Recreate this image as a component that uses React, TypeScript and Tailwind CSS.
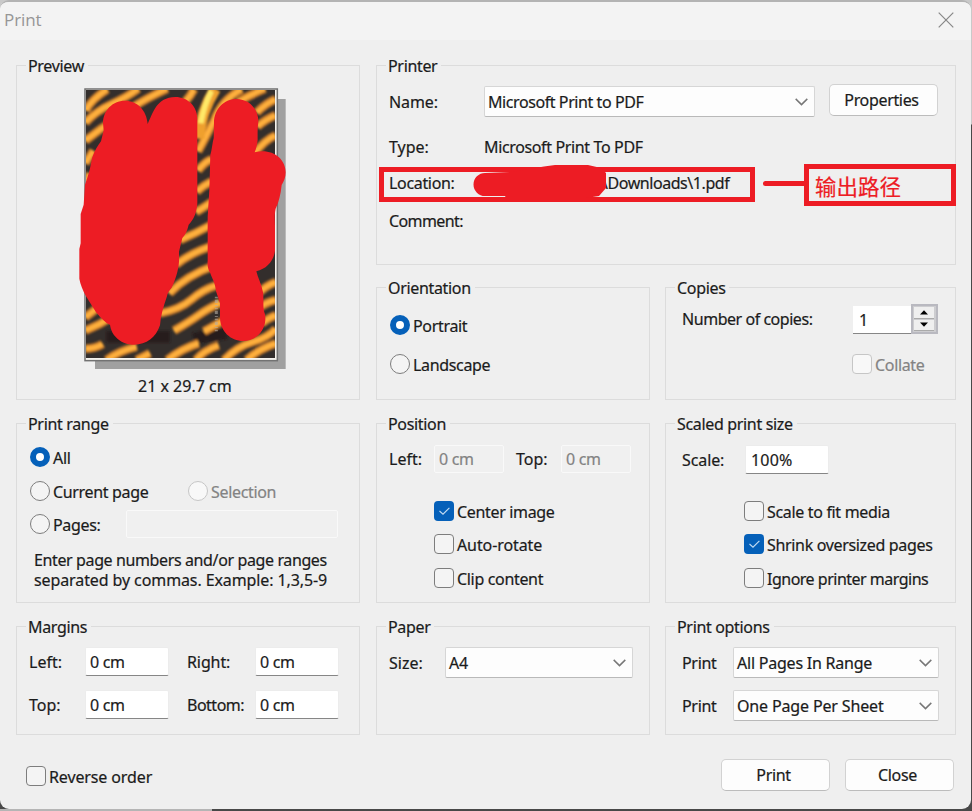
import type { ReactNode } from "react";
import { clsx } from "clsx";

interface GroupProps {
  title: string;
  className?: string;
  children?: ReactNode;
}

// Group box with its caption sitting on the top border
function Group({ title, className, children }: GroupProps) {
  return (
    <section className={clsx("relative border border-[#dcdcdc]", className)}>
      <h2 className="absolute -top-[11px] left-[9px] bg-[#efefef] pl-0.5 pr-1 leading-[22px]">{title}</h2>
      {children}
    </section>
  );
}

function Chevron() {
  return (
    <svg className="mr-[6px] h-2 w-[13px]" viewBox="0 0 13 8" fill="none" stroke="#777" strokeWidth="1.5">
      <path d="M0.7 0.9L6.5 6.6L12.3 0.9" />
    </svg>
  );
}

function Select({ value, className }: { value: string; className?: string }) {
  return (
    <div
      className={clsx(
        "flex h-[31px] shrink-0 items-center justify-between rounded-[2px] border border-[#d6d6d6] border-b-[#b9b9b9] bg-[#fdfdfd] pl-[3px]",
        className
      )}
    >
      <span>{value}</span>
      <Chevron />
    </div>
  );
}

function Field({ value = "", disabled, className }: { value?: string; disabled?: boolean; className?: string }) {
  return (
    <div
      className={clsx(
        "flex shrink-0 items-center rounded-[2px] border",
        disabled
          ? "h-7 border-[#f9f9f9] bg-[#f0f0f0] text-[#838383]"
          : "h-[29px] border-[#ececec] border-b-[#868686] bg-white",
        className ?? "w-[84px] pl-1"
      )}
    >
      {value}
    </div>
  );
}

interface OptionProps {
  label: string;
  checked?: boolean;
  disabled?: boolean;
  className?: string;
}

function Radio({ label, checked, disabled, className }: OptionProps) {
  return (
    <div className={clsx("flex h-5 items-center gap-[3px]", disabled && "text-[#838383]", className)}>
      <span
        className={clsx(
          "size-5 shrink-0 rounded-full",
          checked && "border-[6px] border-[#0560b9] bg-white",
          !checked && !disabled && "border-[1.5px] border-[#7d7d7d] bg-[#f4f4f4]",
          disabled && "border border-[#c6c6c6] bg-[#f8f8f8]"
        )}
      />
      <span className="pt-px">{label}</span>
    </div>
  );
}

function Checkbox({ label, checked, disabled, className }: OptionProps) {
  return (
    <div className={clsx("flex h-5 items-center gap-[3px]", disabled && "text-[#838383]", className)}>
      <span
        className={clsx(
          "flex size-5 shrink-0 items-center justify-center rounded-[4px]",
          checked && "bg-[#0560b9]",
          !checked && !disabled && "border-[1.5px] border-[#7d7d7d] bg-[#f4f4f4]",
          disabled && "border border-[#c6c6c6] bg-[#f8f8f8]"
        )}
      >
        {checked && (
          <svg width="11" height="8" viewBox="0 0 11 8" fill="none" stroke="#c4dcf2" strokeWidth="1.1">
            <path d="M0.5 4L4 7.2L10.4 0.8" />
          </svg>
        )}
      </span>
      <span className="pt-px">{label}</span>
    </div>
  );
}

function Button({ children, className }: { children: ReactNode; className?: string }) {
  return (
    <button
      className={clsx(
        "h-8 w-[109px] shrink-0 rounded-[5px] border border-[#d2d2d2] border-b-[#bcbcbc] bg-[#fdfdfd] pr-1",
        className
      )}
    >
      {children}
    </button>
  );
}

const STRIPES = [
  "M48 92Q62 60 112 28",
  "M46 128Q80 92 125 72T205 26",
  "M46 182Q90 146 140 116",
  "M46 250L70 212",
  "M46 315L60 280",
  "M185 84Q230 54 292 26",
  "M345 66Q362 48 372 28",
  "M384 214Q404 178 432 122Q454 60 515 28",
  "M505 66Q540 44 585 26",
  "M560 98Q590 68 617 58",
  "M562 140Q590 116 617 106",
  "M552 222Q586 178 617 166",
  "M384 272Q405 244 425 238",
  "M380 335Q400 316 425 304",
  "M378 396Q396 386 425 366",
  "M330 480Q378 460 425 434",
  "M318 554Q360 520 425 498",
  "M298 640Q350 586 430 558",
  "M270 700Q330 688 365 658T440 616",
  "M312 752Q360 724 385 706T452 668",
  "M402 754L460 722",
  "M46 712L92 676",
  "M46 752Q90 734 130 708",
  "M46 806Q75 806 98 792",
  "M110 840Q145 814 200 800",
  "M200 840L240 820",
  "M292 840Q335 806 386 790",
  "M378 840Q400 812 446 796",
  "M462 840Q500 800 548 786T618 746",
  "M530 840Q565 808 618 790",
  "M562 642Q590 616 618 606",
  "M566 684Q590 666 618 660",
  "M575 730Q600 712 618 706",
];

function PagePreview() {
  return (
    <svg className="ml-[53px] mt-[14px] block" width="230" height="300" viewBox="0 0 690 900">
      <defs>
        <filter id="soft" x="-5%" y="-5%" width="110%" height="110%">
          <feGaussianBlur stdDeviation="3.5" />
        </filter>
        <clipPath id="art">
          <rect x="48" y="30" width="567" height="804" />
        </clipPath>
      </defs>
      <rect x="75" y="57" width="572" height="810" fill="#a0a0a0" />
      <rect x="45" y="27" width="577" height="815" fill="#f4f1ec" stroke="#727272" strokeWidth="4.5" />
      <g clipPath="url(#art)">
        <rect x="48" y="30" width="567" height="804" fill="#332e2c" />
        <g fill="none" filter="url(#soft)">
          <path d="M110 770H300M370 775L470 760" stroke="#251d1e" strokeWidth="34" />
          {STRIPES.map((d) => (
            <path key={d} d={d} stroke="#c67a2c" strokeWidth="27" />
          ))}
          {STRIPES.map((d) => (
            <path key={d} d={d} stroke="#ffb03c" strokeWidth="14" />
          ))}
          <path d="M386 176Q392 96 436 26" stroke="#efa02e" strokeWidth="34" />
          <path d="M392 130Q402 76 424 32" stroke="#ffe968" strokeWidth="17" />
        </g>
        <path d="M439 650V755" stroke="#b5aea4" strokeWidth="9" strokeDasharray="5 4 10 6 3 5" opacity="0.6" />
      </g>
      {/* redaction strokes */}
      <path
        fill="#ed1c24"
        d="M99 130C99 92 127 62 165 62C202 62 230 91 233 132C247 103 259 51 316 51C354 51 382 80 382 116V370C380 398 371 420 356 434C352 452 346 464 337 474L327 515V545C325 572 316 600 305 623C297 633 292 639 291 649C281 678 272 706 270 736C258 773 229 794 193 794C154 794 124 768 120 734C107 730 93 714 78 697L48 649C38 629 31 613 28 596V507L32 490V402L41 374L45 314C55 286 61 265 66 234C74 211 84 196 93 184L101 151Z"
      />
      <path
        fill="#ed1c24"
        d="M432 128C432 88 462 57 499 57C538 57 566 88 565 126C562 144 563 162 563 180C561 196 558 207 554 217C605 204 647 235 647 277C647 292 642 303 635 315C632 344 626 367 617 386C613 405 615 418 615 438V512C611 544 590 566 559 574C563 592 575 613 579 637C582 659 578 675 582 694C586 704 586 710 586 720C584 756 555 783 520 783C481 783 451 753 450 714V669L438 634C436 608 425 594 421 580C413 565 412 558 413 540V410L418 330L421 225C426 208 427 190 431 174Z"
      />
    </svg>
  );
}

function Preview() {
  return (
    <Group title="Preview" className="h-[335px] w-[344px]">
      <PagePreview />
      <p className="ml-[121px] -mt-[5px] leading-[22px] tracking-normal">21 x 29.7 cm</p>
    </Group>
  );
}

function Printer() {
  return (
    <Group title="Printer" className="h-[200px]">
      <div className="flex items-start pl-3 pt-[18px]">
        <span className="mt-[7px] w-[95px] leading-[22px] tracking-[-0.1px]">Name:</span>
        <Select className="mt-0.5 w-[331px] tracking-[-0.42px]" value="Microsoft Print to PDF" />
        <Button className="ml-[14px]">Properties</Button>
      </div>
      <div className="mt-[19px] flex pl-3 leading-[22px]">
        <span className="w-[95px] tracking-normal">Type:</span>
        <span className="tracking-[-0.36px]">Microsoft Print To PDF</span>
      </div>
      <div className="relative ml-0.5 mt-[9px] flex h-[35px] w-[376px] items-center border-[5px] border-[#ed1c24] pb-[3px] pl-[5px]">
        <span className="w-[213px]">Location:</span>
        <span className="tracking-[-0.44px]">\Downloads\1.pdf</span>
        <svg className="absolute -top-[8px] left-[87px]" width="136" height="38" viewBox="0 0 136 38">
          <path
            fill="#ed1c24"
            d="M14 9L40 8L73 2.5L84 1H117L130 4L135 9V24L128 32L115 34H35L34 32H14A11.5 11.5 0 0 1 14 9Z"
          />
        </svg>
      </div>
      <p className="mt-2 pl-3 leading-[22px] tracking-[-0.6px]">Comment:</p>
      {/* callout */}
      <div className="absolute left-[386px] top-[98px] flex items-start">
        <span className="mt-[17px] h-[5px] w-[41px] rounded-l-sm bg-[#ed1c24]" />
        <span className="h-[42px] w-[152px] border-[5px] border-[#ed1c24] pl-[6px] pt-px font-['Noto_Sans_CJK_SC',sans-serif] text-[21.5px] leading-8 tracking-normal text-[#ed1c24]">
          输出路径
        </span>
      </div>
    </Group>
  );
}

function Spinner() {
  return (
    <div className="flex h-[30px] w-[85px] items-center">
      <div className="mt-0.5 flex h-7 flex-1 items-center border-b border-[#868686] bg-white pl-1.5">1</div>
      <div className="flex h-[30px] w-[27px] flex-col gap-px border-2 border-[#b9b9c0] bg-[#cdcdd0] py-px pl-px pr-0.5">
        <div className="flex flex-1 items-center justify-center border-b border-[#aaa] bg-[#efefef]">
          <svg width="8" height="5" viewBox="0 0 8 5">
            <path d="M0 4.5L4 0.3L8 4.5Z" />
          </svg>
        </div>
        <div className="flex flex-1 items-center justify-center border-b border-[#aaa] bg-[#efefef]">
          <svg width="8" height="5" viewBox="0 0 8 5">
            <path d="M0 0.5L4 4.7L8 0.5Z" />
          </svg>
        </div>
      </div>
    </div>
  );
}

export default function App() {
  return (
    <div className="h-[811px] w-[972px] overflow-hidden bg-linear-to-b from-[#c9c9c9] from-[124px] to-[#484848] to-[125px] font-['Noto_Sans',sans-serif] text-base tracking-[-0.33px] text-[#1b1b1b] [-webkit-text-stroke:0.2px]">
      <div className="h-[809px] w-[970.5px] overflow-hidden rounded-[9px] border-t-2 border-[#b3b3b3] bg-[#efefef]">
        <header className="flex h-[38px] items-center justify-between bg-[#f3f3f3] pl-1 pr-[17px]">
          <h1 className="pb-0.5 font-['Open_Sans',sans-serif] text-[17px] tracking-[-0.1px] text-[#969696] [-webkit-text-stroke:0px]">
            Print
          </h1>
          <svg className="mb-0.5" width="16" height="16" viewBox="0 0 16 16" fill="none" stroke="#878787" strokeWidth="1.2">
            <path d="M0.7 0.7L15.3 15.3M15.3 0.7L0.7 15.3" />
          </svg>
        </header>

        <main className="w-[971px] pl-4 pt-[25px]">
          <div className="flex gap-4">
            <Preview />
            <div className="flex w-[580px] flex-col gap-[22px]">
              <Printer />
              <div className="flex gap-[15px]">
                <Group title="Orientation" className="h-[113px] w-[274px] pl-[13px] pt-[27px]">
                  <Radio label="Portrait" checked />
                  <Radio label="Landscape" className="mt-[19px]" />
                </Group>
                <Group title="Copies" className="h-[113px] w-[291px] pl-4 pt-4">
                  <div className="flex items-center">
                    <span className="w-[171px] tracking-[-0.46px]">Number of copies:</span>
                    <Spinner />
                  </div>
                  <Checkbox label="Collate" disabled className="ml-[170px] mt-5" />
                </Group>
              </div>
            </div>
          </div>

          <div className="mt-[23px] flex">
            <Group title="Print range" className="h-[180px] w-[344px] pl-[13px] pt-[23px]">
              <Radio label="All" checked />
              <div className="mt-[14px] flex">
                <Radio label="Current page" className="w-[158px]" />
                <Radio label="Selection" disabled />
              </div>
              <div className="mt-[9px] flex items-center">
                <Radio label="Pages:" className="w-[96px]" />
                <Field disabled className="w-[212px]" />
              </div>
              <p className="ml-[4px] mt-[13px] whitespace-nowrap leading-[19.5px]">
                <span className="tracking-[-0.38px]">Enter page numbers and/or page ranges</span>
                <br />
                <span className="tracking-[-0.1px]">separated by commas. Example: 1,3,5-9</span>
              </p>
            </Group>
            <Group title="Position" className="ml-4 h-[180px] w-[274px] pl-3 pt-[21px]">
              <div className="flex items-center">
                <span className="w-[45px] tracking-normal">Left:</span>
                <Field disabled value="0 cm" className="w-[70px] pl-1" />
                <span className="ml-3 w-[45px] tracking-normal">Top:</span>
                <Field disabled value="0 cm" className="w-[70px] pl-1" />
              </div>
              <div className="ml-[45px] mt-7">
                <Checkbox label="Center image" checked />
                <Checkbox label="Auto-rotate" className="mt-[13px] tracking-[-0.1px]" />
                <Checkbox label="Clip content" className="mt-[14px]" />
              </div>
            </Group>
            <Group title="Scaled print size" className="ml-[15px] h-[180px] w-[291px] pl-4 pt-[21px]">
              <div className="flex items-center">
                <span className="w-[63px] tracking-[-0.1px]">Scale:</span>
                <Field value="100%" className="w-[84px] pl-[5px] tracking-[0.2px]" />
              </div>
              <div className="ml-[62px] mt-[27px]">
                <Checkbox label="Scale to fit media" />
                <Checkbox label="Shrink oversized pages" checked className="mt-[13px]" />
                <Checkbox label="Ignore printer margins" className="mt-[14px] tracking-[-0.5px]" />
              </div>
            </Group>
          </div>

          <div className="mt-[23px] flex">
            <Group title="Margins" className="h-[109px] w-[344px] pl-3 pt-5">
              <div className="flex items-center">
                <span className="w-[56px] tracking-normal">Left:</span>
                <Field value="0 cm" />
                <span className="ml-[18px] w-[68px] tracking-[-0.1px]">Right:</span>
                <Field value="0 cm" />
              </div>
              <div className="mt-[14px] flex items-center">
                <span className="w-[56px] tracking-normal">Top:</span>
                <Field value="0 cm" />
                <span className="ml-[18px] w-[68px] tracking-[-0.5px]">Bottom:</span>
                <Field value="0 cm" />
              </div>
            </Group>
            <Group title="Paper" className="ml-4 h-[109px] w-[274px] pl-3 pt-5">
              <div className="flex items-center">
                <span className="w-[56px] tracking-normal">Size:</span>
                <Select value="A4" className="w-[188px] pl-1" />
              </div>
            </Group>
            <Group title="Print options" className="ml-[15px] h-[109px] w-[291px] pl-4 pt-5">
              <div className="flex items-center">
                <span className="w-[51px]">Print</span>
                <Select value="All Pages In Range" className="w-[206px] pl-1 tracking-[-0.22px]" />
              </div>
              <div className="mt-3 flex items-center">
                <span className="w-[51px]">Print</span>
                <Select value="One Page Per Sheet" className="w-[206px] pl-1 tracking-[-0.15px]" />
              </div>
            </Group>
          </div>

          <div className="mt-6 flex items-center">
            <Checkbox label="Reverse order" className="ml-2.5 mt-0.5 w-[695px] tracking-[-0.12px]" />
            <Button>Print</Button>
            <Button className="ml-[15px]">Close</Button>
          </div>
        </main>
      </div>
      {/* strip of the window behind */}
      <div className="h-0.5 w-[212px] bg-[#b5b5b5]" />
    </div>
  );
}
